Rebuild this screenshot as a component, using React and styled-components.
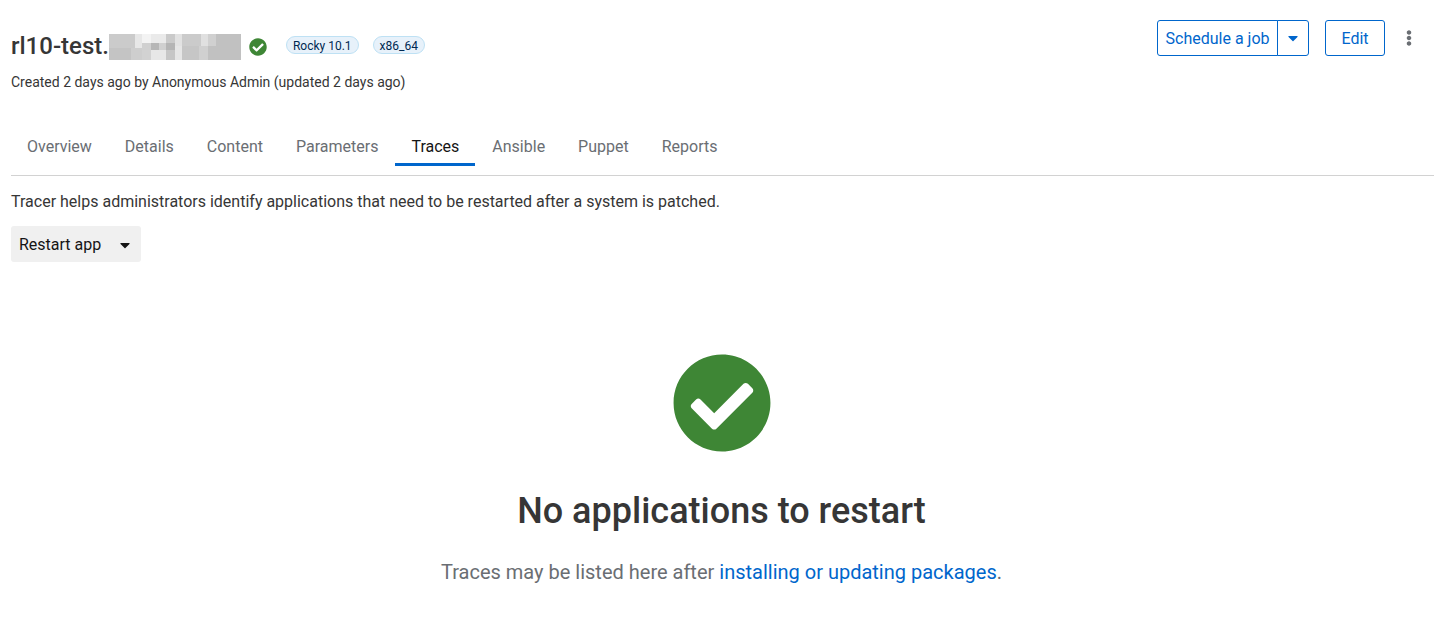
import React from "react";
import styled, { createGlobalStyle } from "styled-components";
import { FaCheckCircle, FaCaretDown, FaEllipsisV } from "react-icons/fa";

const GlobalStyle = createGlobalStyle`
  :root {
    --blue: #0066cc;
    --green: #3e8635;
    --text: #363636;
    --black: #151515;
    --gray: #6a6e73;
    --border: #d2d2d2;
  }
  * {
    box-sizing: border-box;
  }
  body {
    margin: 0;
    background-color: #fff;
    color: var(--text);
    font-family: Roboto, "Open Sans", sans-serif;
    font-size: 16px;
    line-height: 24px;
  }
  button {
    font: inherit;
    cursor: pointer;
  }
`;

const TABS = [
  "Overview",
  "Details",
  "Content",
  "Parameters",
  "Traces",
  "Ansible",
  "Puppet",
  "Reports",
];

// x, y, width, height, fill
const MASK_BLOCKS = [
  [0, 0, 26, 14, "#cbcbcb"],
  [26, 0, 7, 14, "#e7e7e7"],
  [33, 0, 9, 9, "#f3f3f3"],
  [42, 0, 15, 9, "#eaeaea"],
  [57, 0, 9, 9, "#cacaca"],
  [66, 0, 7, 12, "#e2e2e2"],
  [73, 0, 19, 12, "#cbcbcb"],
  [92, 0, 7, 12, "#e0e0e0"],
  [99, 0, 8, 12, "#d0d0d0"],
  [33, 9, 9, 7, "#d0d0d0"],
  [42, 9, 8, 7, "#b6b6b6"],
  [50, 9, 7, 7, "#d0d0d0"],
  [57, 9, 9, 7, "#b5b5b5"],
  [0, 14, 22, 12, "#c4c4c4"],
  [22, 14, 11, 12, "#cecece"],
  [33, 16, 9, 10, "#d2d2d2"],
  [42, 16, 15, 10, "#e7e7e7"],
  [57, 16, 9, 10, "#c6c6c6"],
  [66, 12, 7, 14, "#e6e6e6"],
  [73, 12, 17, 14, "#c6c6c6"],
  [90, 12, 9, 14, "#d0d0d0"],
];

const Page = styled.main`
  padding: 20px 0 48px 11px;
`;
const Header = styled.header`
  display: flex;
  justify-content: space-between;
  align-items: flex-start;
  padding-right: 17px;
`;
const TitleRow = styled.div`
  display: flex;
  align-items: center;
  height: 52px;
`;
const HostName = styled.h1`
  display: flex;
  align-items: center;
  margin: 0 8px 0 0;
  font-size: 24px;
  font-weight: 500;
  line-height: 32px;
`;
const HostStatus = styled(FaCheckCircle)`
  color: var(--green);
  margin: 2px 19px 0 0;
`;
const Labels = styled.div`
  display: flex;
  gap: 14px;
  padding-bottom: 2px;
`;
const Label = styled.span`
  height: 18px;
  padding: 0 6px;
  border: 1px solid #bee1f4;
  border-radius: 9px;
  background-color: #e7f1fa;
  color: #002952;
  font-size: 12px;
  line-height: 18px;
`;
const Created = styled.p`
  margin: 0;
  font-size: 14px;
  line-height: 20px;
`;
const Actions = styled.div`
  display: flex;
  align-items: center;
`;
const OutlineButton = styled.button`
  height: 36px;
  min-width: ${(p) => p.$width}px;
  padding: 2px 6px 0;
  border: 1px solid var(--blue);
  border-radius: 3px;
  background-color: #fff;
  color: var(--blue);
`;
const SplitButton = styled.div`
  display: flex;
  margin-right: 16px;
  ${OutlineButton}:first-child {
    border-radius: 3px 0 0 3px;
  }
  ${OutlineButton}:last-child {
    margin-left: -1px;
    padding-top: 0;
    border-radius: 0 3px 3px 0;
  }
`;
const Caret = styled(FaCaretDown)`
  display: block;
  margin: 0 auto;
`;
const KebabButton = styled.button`
  display: flex;
  justify-content: center;
  align-items: center;
  width: 16px;
  height: 36px;
  margin-left: 16px;
  padding: 0;
  border: none;
  background: none;
  color: var(--gray);
`;
const TabList = styled.div`
  display: flex;
  gap: 1px;
  margin-top: 34px;
  padding-bottom: 9px;
  border-bottom: 1px solid var(--border);
`;
const Tab = styled.button`
  padding: 9px 16px 4px;
  border: none;
  border-bottom: 3px solid ${(p) => (p.$active ? "var(--blue)" : "transparent")};
  background: none;
  color: ${(p) => (p.$active ? "var(--black)" : "var(--gray)")};
`;
const Description = styled.p`
  margin: 14px 0 12px;
`;
const DropdownToggle = styled.button`
  display: flex;
  justify-content: space-between;
  align-items: center;
  width: 130px;
  height: 36px;
  padding: 1px 8px 0;
  border: none;
  border-radius: 3px;
  background-color: #f0f0f0;
  color: var(--black);
`;
const EmptyState = styled.section`
  display: flex;
  flex-direction: column;
  align-items: center;
  padding: 91px 2px 0 0;
  text-align: center;
`;
const EmptyTitle = styled.h2`
  margin: 34px 0 0;
  font-size: 36px;
  font-weight: 500;
  line-height: 48px;
`;
const EmptyBody = styled.p`
  margin: 23px 0 0;
  color: var(--gray);
  font-size: 20px;
  line-height: 28px;
`;
const Link = styled.a`
  color: var(--blue);
  text-decoration: none;
`;

function HostMask() {
  return (
    <svg width="132" height="28" viewBox="0 -2 132 28" shapeRendering="crispEdges" aria-hidden="true">
      <rect width="132" height="26" fill="#c1c1c1" />
      {MASK_BLOCKS.map(([x, y, width, height, fill]) => (
        <rect key={`${x}-${y}`} x={x} y={y} width={width} height={height} fill={fill} />
      ))}
    </svg>
  );
}

function App() {
  return (
    <>
      <GlobalStyle />
      <Page>
        <Header>
          <div>
            <TitleRow>
              <HostName>
                rl10-test.
                <HostMask />
              </HostName>
              <HostStatus size={18} />
              <Labels>
                <Label>Rocky 10.1</Label>
                <Label>x86_64</Label>
              </Labels>
            </TitleRow>
            <Created>Created 2 days ago by Anonymous Admin (updated 2 days ago)</Created>
          </div>
          <Actions>
            <SplitButton>
              <OutlineButton type="button" $width={121}>
                Schedule a job
              </OutlineButton>
              <OutlineButton type="button" $width={32} aria-label="More job options">
                <Caret size={16} />
              </OutlineButton>
            </SplitButton>
            <OutlineButton type="button" $width={60}>
              Edit
            </OutlineButton>
            <KebabButton type="button" aria-label="Host actions">
              <FaEllipsisV size={16} />
            </KebabButton>
          </Actions>
        </Header>

        <TabList role="tablist">
          {TABS.map((tab) => (
            <Tab key={tab} type="button" role="tab" aria-selected={tab === "Traces"} $active={tab === "Traces"}>
              {tab}
            </Tab>
          ))}
        </TabList>

        <Description>
          Tracer helps administrators identify applications that need to be restarted after a system is patched.
        </Description>
        <DropdownToggle type="button" aria-haspopup="menu">
          Restart app
          <FaCaretDown size={16} />
        </DropdownToggle>

        <EmptyState>
          <FaCheckCircle size={100} color="var(--green)" />
          <EmptyTitle>No applications to restart</EmptyTitle>
          <EmptyBody>
            Traces may be listed here after <Link href="#content">installing or updating packages</Link>.
          </EmptyBody>
        </EmptyState>
      </Page>
    </>
  );
}

export default App;
